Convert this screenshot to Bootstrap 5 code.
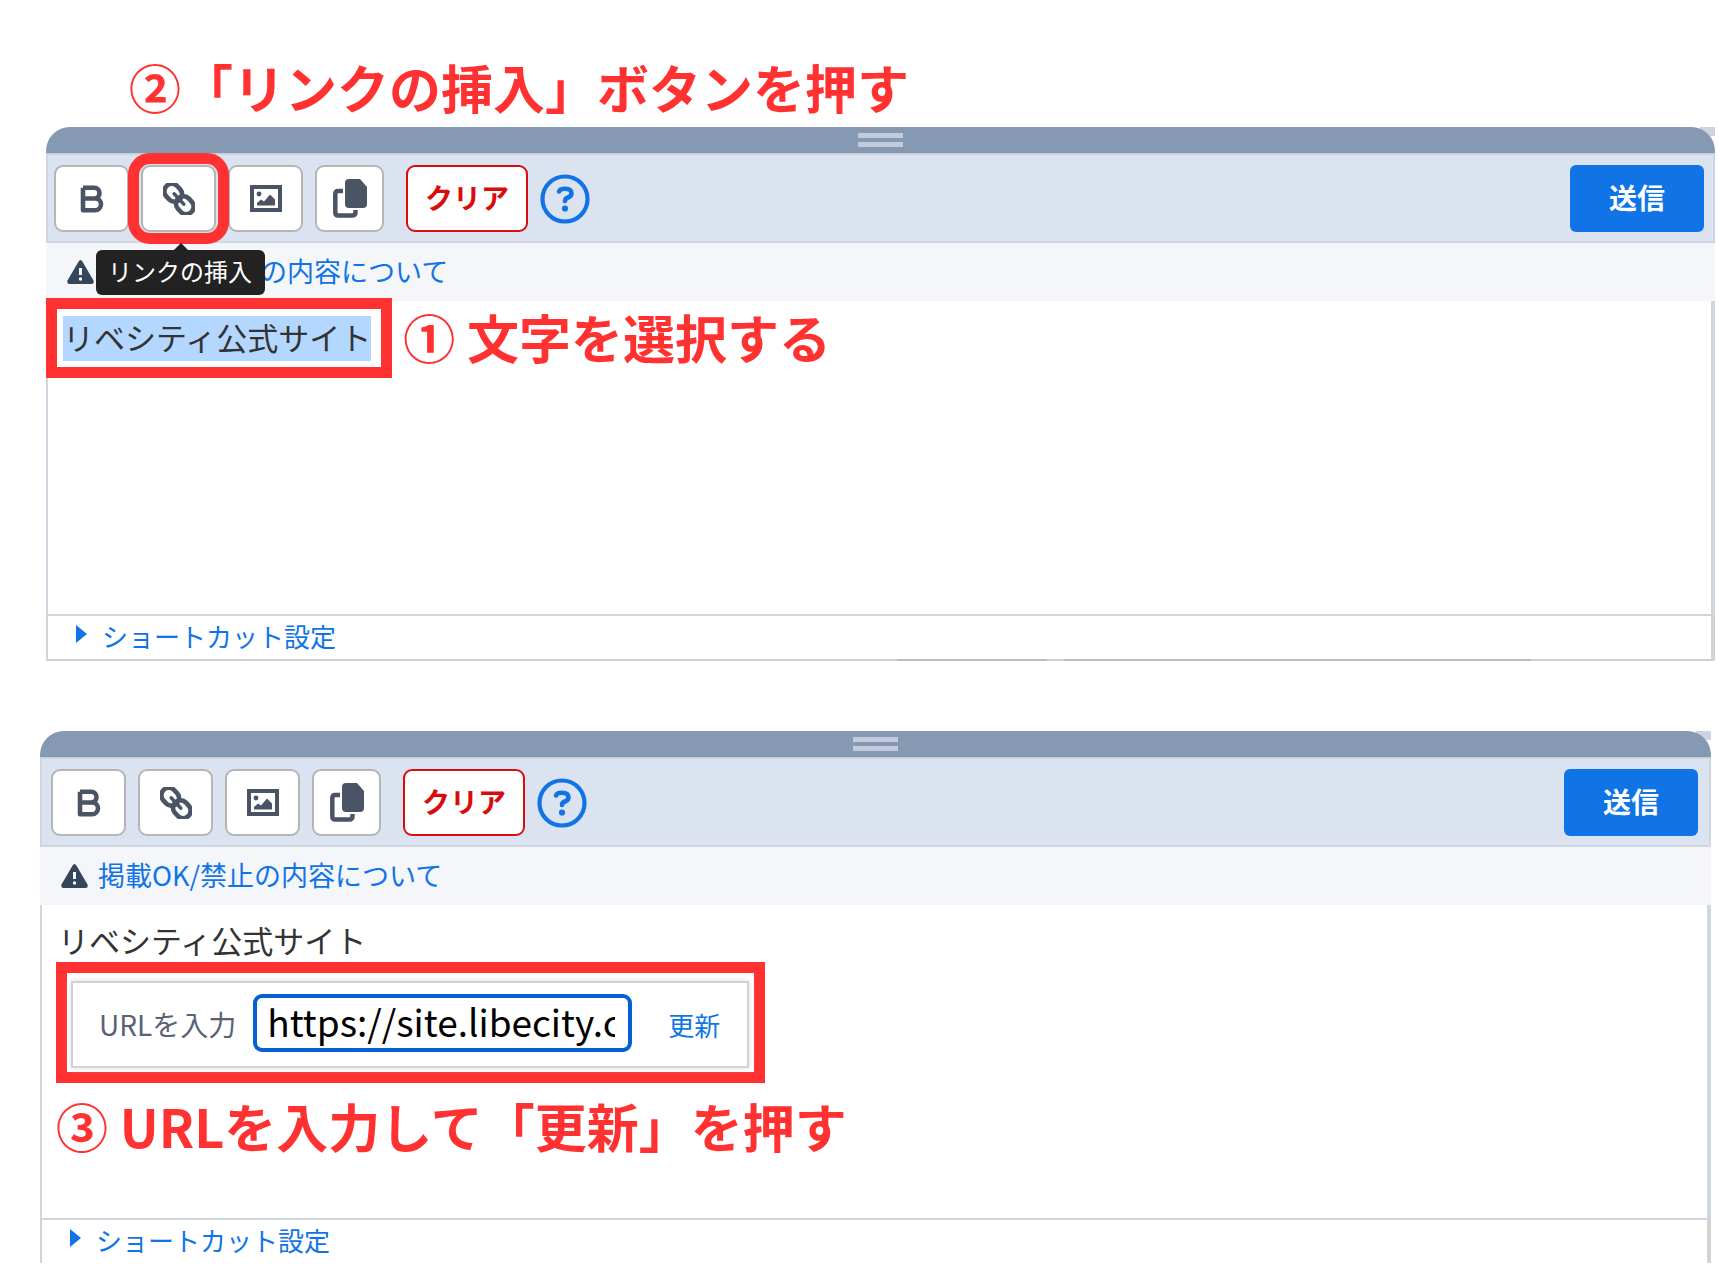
<!DOCTYPE html>
<html lang="ja">
<head>
<meta charset="utf-8">
<meta name="viewport" content="width=device-width, initial-scale=1">
<title>リンクの挿入</title>
<link href="https://cdn.jsdelivr.net/npm/bootstrap@5.3.0/dist/css/bootstrap.min.css" rel="stylesheet">
<style>
  body { font-family: "Noto Sans CJK JP", sans-serif; background: #fff; color: #333; }
  .step-text { font-size: 52px; line-height: 64px; font-weight: 700; color: #ff3131; white-space: nowrap; }
  .step-top { padding: 55px 0 0 129px; height: 127px; }
  .editor-one { margin: 0 4px 0 46px; }
  .editor-two { margin: 70px 8px 0 40px; }
  .grip-bar { height: 27px; background: #8599b3; border-radius: 24px 24px 0 0; border-bottom: 1px solid #c6cdd8; gap: 4px; }
  .grip-bar i { width: 45px; height: 5px; background: #c1cbdb; }
  .scroll-corner { top: 0; right: 0; width: 15px; height: 9px; background: #ccd4e1; z-index: -1; }
  .tool-row { background: #dbe2f0; border: 2px solid #d0d6df; border-top-width: 1px; padding: 10px 9px 9px 6px; }
  .editor-two .tool-row { padding-left: 9px; padding-right: 11px; }
  .tool-set { gap: 12px; }
  .tool-row .tool-btn { width: 75px; height: 67px; padding: 0; background: #fff; border: 2px solid #b5b5b5; border-radius: 9px; color: #4a5464; display: flex; align-items: center; justify-content: center; }
  .tool-row .copy-btn { width: 69px; }
  .tool-row .clear-btn { width: 122px; height: 67px; margin-left: 10px; padding: 0 0 4px; background: #fff; border: 2px solid #d90b0b; border-radius: 9px; color: #d90b0b; font-size: 28px; font-weight: 700; }
  .tool-row .help-btn { padding: 0; border: 0; background: none; line-height: 0; }
  .tool-row .send-btn { width: 134px; height: 67px; padding: 0 0 4px; border: 0; border-radius: 6px; background: #1074e7; font-size: 28px; font-weight: 700; }
  .ring { inset: -12px -13px; border: 11px solid #ff3131; border-radius: 22px; pointer-events: none; z-index: 2; }
  .tip-label { top: 85px; left: -45px; padding: 0 13px 0 12px; height: 45px; line-height: 41px; background: #222; color: #fff; font-size: 24px; border-radius: 6px; white-space: nowrap; z-index: 3; }
  .tip-label::before { content: ""; position: absolute; top: -7px; left: 77px; border: 8px solid transparent; border-top: 0; border-bottom-color: #222; }
  .notice-row { height: 58px; padding: 0 0 0 21px; background: #f4f6fa; color: #35455c; gap: 10px; }
  .blue-link { color: #1074e7; font-size: 26px; line-height: 40px; text-decoration: none; }
  .notice-row .blue-link { font-size: 27px; padding-bottom: 3px; }
  .write-area { border: solid #d0d6df; border-width: 0 4px 2px 2px; height: 315px; }
  .body-text { font-size: 31px; line-height: 45px; padding-left: 2px; }
  .red-frame { border: 11px solid #ff3131; width: fit-content; }
  .frame-select { margin: -3px 11px 0 -2px; padding: 7px 10px 6px 6px; }
  .frame-select .picked { background: #b3d7ff; line-height: 41px; padding: 0 0 4px; }
  .shortcut-row { height: 43px; padding: 0 0 4px 28px; border: solid #d3d3d3; border-width: 0 4px 0 2px; gap: 15px; }
  .shortcut-row svg { margin-bottom: 3px; }
  .floor-line { height: 2px; background: linear-gradient(90deg, #d0d0d0 51%, #c0c0b2 51% 60%, #d0d0d0 60% 61%, #c0c0b2 61% 89%, #d0d0d0 89%); }
  .editor-two .write-area { padding: 12px 0 0 14px; }
  .frame-url { padding: 8px 5px 4px 4px; }
  .url-box { border: 2px solid #cdd3db; height: 87px; box-shadow: 0 0 6px #ddd; padding: 0 27px 0 26px; color: #596273; font-size: 28px; }
  .url-box label { padding-bottom: 2px; }
  .url-box .url-field { width: 379px; height: 58px; margin: 0 36px 4px 17px; border: 4px solid #0560d4; border-radius: 9px; padding: 0 13px 4px 10px; color: #000; font-size: 37px; outline: 0; }
  .step-bottom { margin-top: 11px; }
</style>
<script src="https://cdn.jsdelivr.net/npm/bootstrap@5.3.0/dist/js/bootstrap.bundle.min.js"></script>
</head>
<body>
<svg width="0" height="0" class="position-absolute" aria-hidden="true">
  <symbol id="ic-bold" viewBox="0 0 24 28"><path d="M3 2.800H14C17.500 2.800 19.500 5 19.500 8S17.500 13.500 14 13.500H3M14 13.500H15C18.500 13.500 21 16 21 19.200S18.500 25.200 15 25.200H3V2.800" fill="none" stroke="currentColor" stroke-width="4.600" stroke-linejoin="round"/></symbol>
  <symbol id="ic-link" viewBox="0 0 32 32"><g fill="none" stroke="currentColor" stroke-width="4.600" transform="rotate(47 16 16)"><rect x="-2" y="8.500" width="19" height="15" rx="7.500"/><rect x="15" y="8.500" width="19" height="15" rx="7.500"/><path d="M9 16H23" stroke-width="3.600" stroke-linecap="round"/></g></symbol>
  <symbol id="ic-image" viewBox="0 0 32 27"><path d="M2 2H30V25H2Z" fill="none" stroke="currentColor" stroke-width="4"/><circle cx="9" cy="9" r="2.400" fill="currentColor"/><path d="M7 20.500V18L11 14.500L14 16.500L20 9.500L25 14.500V20.500Z" fill="currentColor"/></symbol>
  <symbol id="ic-copy" viewBox="0 0 34 39"><path d="M16 0H27L34 8V25Q34 29 30 29H16Q12 29 12 25V4Q12 0 16 0Z" fill="currentColor"/><path d="M10 12H5Q2.300 12 2.300 15V33Q2.300 36.500 5 36.500H19Q22.500 36.500 22.500 33V31" fill="none" stroke="currentColor" stroke-width="4.500"/></symbol>
  <symbol id="ic-help" viewBox="0 0 50 50"><circle cx="25" cy="25" r="22.500" fill="none" stroke="currentColor" stroke-width="4.200"/><path d="M19 17.500Q20 14.800 25 14.800Q31.500 14.800 31.500 19.300Q31.500 22 28.500 23.300Q25 24.500 25 27" fill="none" stroke="currentColor" stroke-width="4.600" stroke-linecap="round"/><circle cx="25" cy="34.500" r="3.100" fill="currentColor"/></symbol>
  <symbol id="ic-warn" viewBox="0 0 27 24"><path d="M13.500 0Q14.600 0 15.400 1.500L26.500 20.500Q27.500 24 24.500 24H2.500Q-.500 24 .500 20.500L11.600 1.500Q12.400 0 13.500 0Z" fill="currentColor"/><path d="M13.500 8V15" stroke="#fff" stroke-width="3"/><circle cx="13.500" cy="19" r="1.700" fill="#fff"/></symbol>
  <symbol id="ic-play" viewBox="0 0 11 18"><path d="M0 0L11 9L0 18Z" fill="currentColor"/></symbol>
</svg>

<h1 class="step-text step-top mb-0">②「リンクの挿入」ボタンを押す</h1>

<section class="editor-one">
  <div class="position-relative">
    <div class="scroll-corner position-absolute"></div>
    <div class="grip-bar d-flex flex-column align-items-center justify-content-center"><i></i><i></i></div>
  </div>
  <div class="tool-row d-flex align-items-center">
    <div class="tool-set d-flex align-items-center">
      <button class="btn tool-btn" type="button" aria-label="太字"><svg width="24" height="28"><use href="#ic-bold"/></svg></button>
      <div class="position-relative">
        <button class="btn tool-btn" type="button" aria-label="リンクの挿入"><svg width="32" height="32"><use href="#ic-link"/></svg></button>
        <div class="ring position-absolute"></div>
        <div class="tip-label position-absolute">リンクの挿入</div>
      </div>
      <button class="btn tool-btn" type="button" aria-label="画像"><svg width="32" height="27"><use href="#ic-image"/></svg></button>
      <button class="btn tool-btn copy-btn" type="button" aria-label="コピー"><svg width="34" height="39"><use href="#ic-copy"/></svg></button>
      <button class="btn clear-btn" type="button">クリア</button>
      <button class="btn help-btn" type="button" aria-label="ヘルプ"><svg width="50" height="50" color="#1074e7"><use href="#ic-help"/></svg></button>
    </div>
    <button class="btn btn-primary send-btn ms-auto" type="button">送信</button>
  </div>
  <div class="notice-row d-flex align-items-center">
    <svg width="27" height="24"><use href="#ic-warn"/></svg>
    <a class="blue-link" href="#">掲載OK/禁止の内容について</a>
  </div>
  <div class="write-area">
    <div class="d-flex align-items-start">
      <div class="red-frame frame-select"><div class="body-text picked">リベシティ公式サイト</div></div>
      <div class="step-text pt-1">① 文字を選択する</div>
    </div>
  </div>
  <div class="shortcut-row d-flex align-items-center">
    <svg width="11" height="18" color="#1074e7"><use href="#ic-play"/></svg>
    <a class="blue-link" href="#">ショートカット設定</a>
  </div>
  <div class="floor-line"></div>
</section>

<section class="editor-two">
  <div class="position-relative">
    <div class="scroll-corner position-absolute"></div>
    <div class="grip-bar d-flex flex-column align-items-center justify-content-center"><i></i><i></i></div>
  </div>
  <div class="tool-row d-flex align-items-center">
    <div class="tool-set d-flex align-items-center">
      <button class="btn tool-btn" type="button" aria-label="太字"><svg width="24" height="28"><use href="#ic-bold"/></svg></button>
      <button class="btn tool-btn" type="button" aria-label="リンクの挿入"><svg width="32" height="32"><use href="#ic-link"/></svg></button>
      <button class="btn tool-btn" type="button" aria-label="画像"><svg width="32" height="27"><use href="#ic-image"/></svg></button>
      <button class="btn tool-btn copy-btn" type="button" aria-label="コピー"><svg width="34" height="39"><use href="#ic-copy"/></svg></button>
      <button class="btn clear-btn" type="button">クリア</button>
      <button class="btn help-btn" type="button" aria-label="ヘルプ"><svg width="50" height="50" color="#1074e7"><use href="#ic-help"/></svg></button>
    </div>
    <button class="btn btn-primary send-btn ms-auto" type="button">送信</button>
  </div>
  <div class="notice-row d-flex align-items-center">
    <svg width="27" height="24"><use href="#ic-warn"/></svg>
    <a class="blue-link" href="#">掲載OK/禁止の内容について</a>
  </div>
  <div class="write-area">
    <div class="body-text">リベシティ公式サイト</div>
    <div class="red-frame frame-url">
      <div class="url-box d-flex align-items-center">
        <label for="url-field">URLを入力</label>
        <input class="url-field" id="url-field" type="text" value="https://site.libecity.com">
        <a class="blue-link" href="#">更新</a>
      </div>
    </div>
    <div class="step-text step-bottom">③ URLを入力して「更新」を押す</div>
  </div>
  <div class="shortcut-row d-flex align-items-center">
    <svg width="11" height="18" color="#1074e7"><use href="#ic-play"/></svg>
    <a class="blue-link" href="#">ショートカット設定</a>
  </div>
</section>
</body>
</html>
